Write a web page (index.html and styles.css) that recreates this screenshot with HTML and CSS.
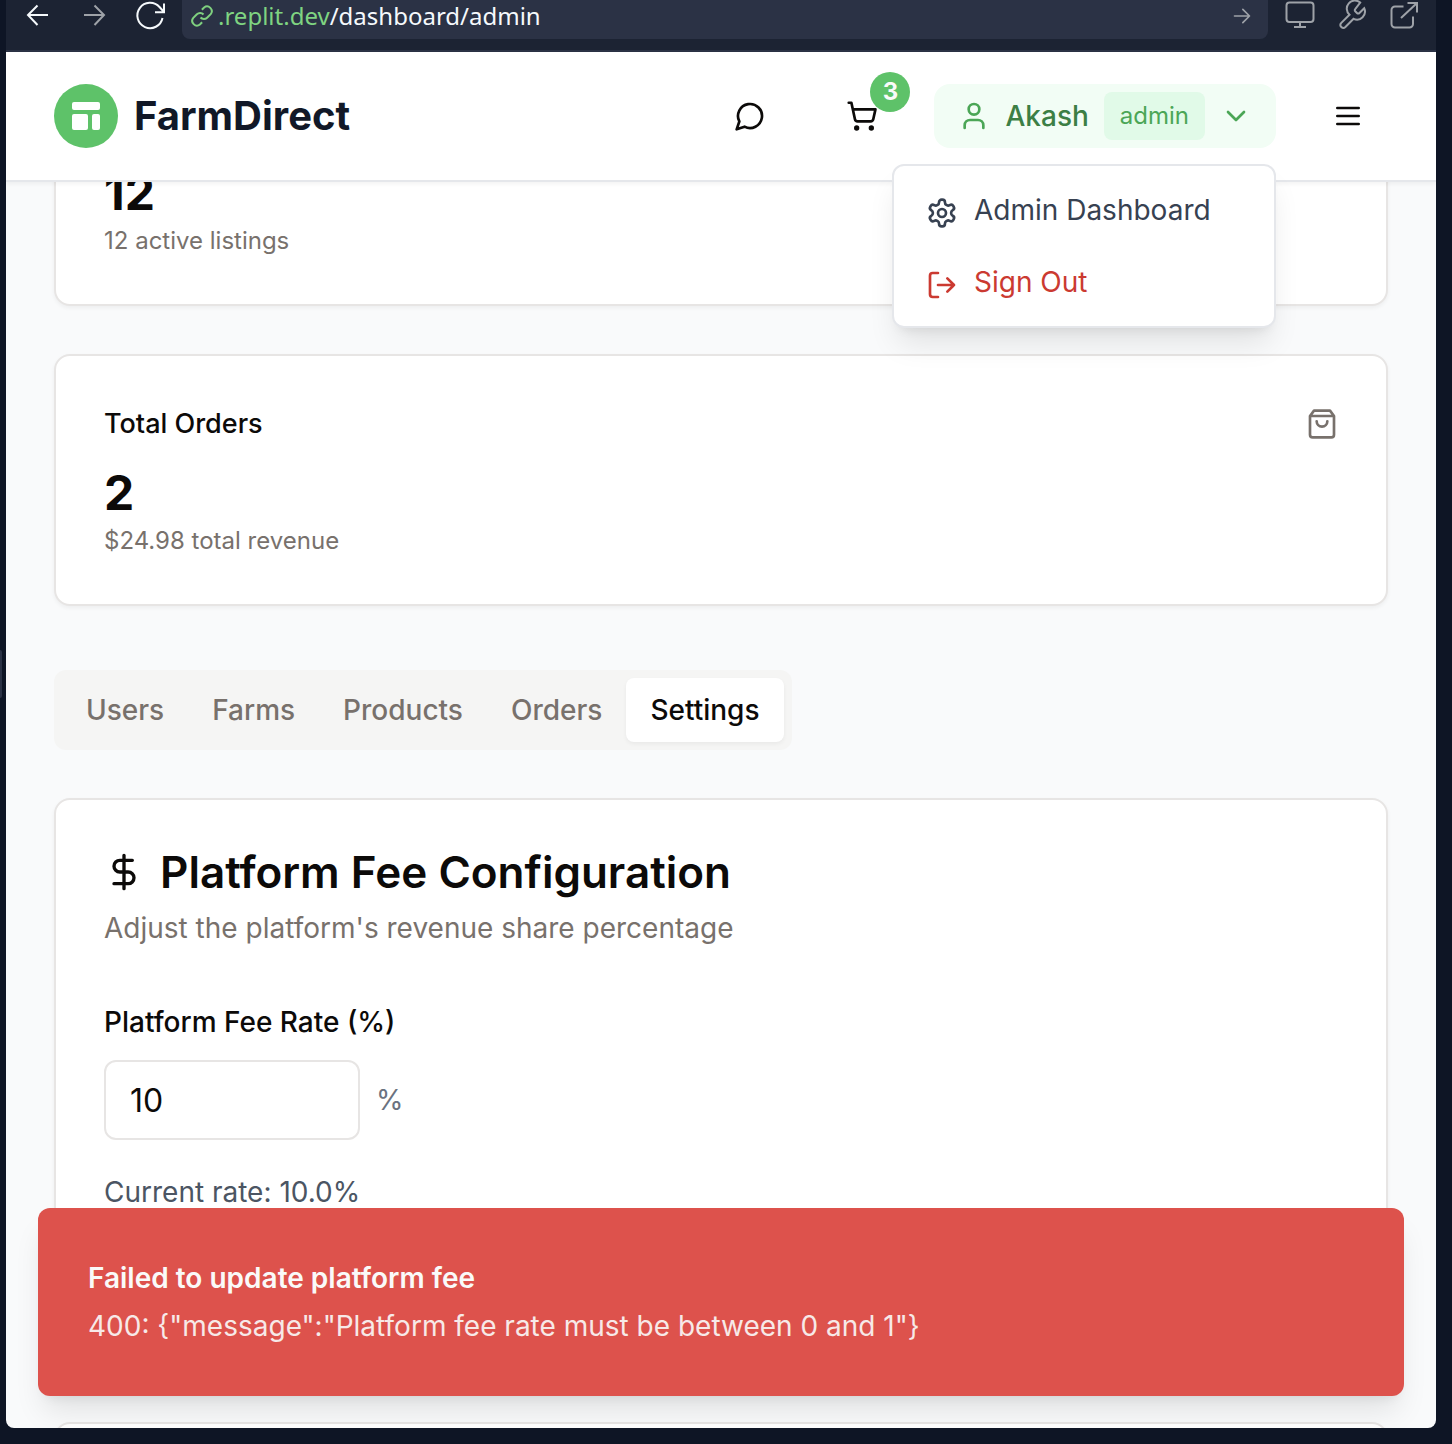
FILE: index.html
```html
<!DOCTYPE html>
<html lang="en">
<head>
<meta charset="utf-8">
<meta name="viewport" content="width=device-width, initial-scale=1">
<title>FarmDirect</title>
<link rel="stylesheet" href="styles.css">
</head>
<body>
<div class="workspace">
  <div class="rail"><span class="rail-handle"></span></div>
  <div class="preview">
    <div class="toolbar">
      <button class="tool" type="button" aria-label="Back"><svg class="icon thin" viewBox="0 0 32 32"><path d="M26 15H6M15.500 5.500 6 15l9.500 10"/></svg></button>
      <button class="tool dim" type="button" aria-label="Forward"><svg class="icon thin" viewBox="0 0 32 32"><path d="M6 15h20M16.500 5.500 26 15l-9.500 10"/></svg></button>
      <button class="tool reload" type="button" aria-label="Reload"><svg class="icon thin" viewBox="0 0 32 32"><path d="M28.500 18A12.700 12.700 0 1 1 25.500 7l4.500 5M30 3.500V12.300H21"/></svg></button>
      <form class="address">
        <svg class="icon link-icon thin" viewBox="0 0 24 24"><path d="M10.500 13.500a4.600 4.600 0 0 0 6.600.2l3.600-3.600a4.700 4.700 0 0 0-6.600-6.600l-2.200 2.200M13.500 10.500a4.600 4.600 0 0 0-6.600-.2l-3.600 3.600a4.700 4.700 0 0 0 6.600 6.600l2.200-2.200"/></svg>
        <span class="url"><span class="host">.replit.dev</span>/dashboard/admin</span>
        <button class="go" type="button" aria-label="Go"><svg class="icon go-icon" viewBox="0 0 24 24"><path d="M3 12h18M13 4l8 8-8 8"/></svg></button>
      </form>
      <div class="tools">
        <button class="tool soft" type="button" aria-label="Devices"><svg class="icon thin" viewBox="0 0 32 32"><rect x="2.500" y="2.500" width="27" height="19.500" rx="3"/><path d="M16 22v5M10 27h12"/></svg></button>
        <button class="tool soft" type="button" aria-label="Developer tools"><svg class="icon thin" viewBox="0 0 32 32"><path d="M19.200 9.200a1.400 1.400 0 0 0 0 2l2 2a1.400 1.400 0 0 0 2 0l5-5a8 8 0 0 1-10.600 10.600l-8.200 8.200a2.900 2.900 0 0 1-4.100-4.100l8.200-8.200A8 8 0 0 1 24.200 2.600z"/></svg></button>
        <button class="tool soft" type="button" aria-label="Open in new tab"><svg class="icon thin" viewBox="0 0 32 32"><path d="M25 16.500V24a3.500 3.500 0 0 1-3.500 3.500H7A3.500 3.500 0 0 1 3.500 24V10A3.500 3.500 0 0 1 7 6.500h8.500M19.500 3H29v9.500M28.500 3.500 13 18"/></svg></button>
      </div>
    </div>

    <div class="site">
      <header class="site-header">
        <a class="brand" href="#">
          <span class="brand-mark"><svg class="brand-icon" viewBox="0 0 20 20"><rect x="3" y="3" width="14" height="4" rx="1"/><rect x="3" y="9" width="8" height="8" rx="1"/><rect x="13" y="9" width="4" height="8" rx="1"/></svg></span>
          <span class="brand-name">FarmDirect</span>
        </a>
        <nav class="actions">
          <button class="icon-button" type="button" aria-label="Messages"><svg class="icon" viewBox="0 0 24 24"><path d="M7.900 20A9 9 0 1 0 4 16.100L2 22Z"/></svg></button>
          <button class="icon-button" type="button" aria-label="Cart"><svg class="icon" viewBox="0 0 24 24"><circle cx="8" cy="21" r="1"/><circle cx="19" cy="21" r="1"/><path d="M2.050 2.050h2l2.660 12.420a2 2 0 0 0 2 1.580h9.780a2 2 0 0 0 1.950-1.570l1.650-7.430H5.120"/></svg><span class="count">3</span></button>
          <div class="account">
            <button class="account-button" type="button">
              <svg class="icon" viewBox="0 0 24 24"><path d="M19 21v-2a4 4 0 0 0-4-4H9a4 4 0 0 0-4 4v2"/><circle cx="12" cy="7" r="4"/></svg>
              <span class="account-name">Akash</span>
              <span class="role">admin</span>
              <svg class="icon" viewBox="0 0 24 24"><path d="m6 9 6 6 6-6"/></svg>
            </button>
            <div class="menu">
              <a class="menu-item" href="#"><svg class="icon" viewBox="0 0 24 24"><path d="M12.220 2h-.44a2 2 0 0 0-2 2v.18a2 2 0 0 1-1 1.730l-.43.25a2 2 0 0 1-2 0l-.15-.08a2 2 0 0 0-2.730.73l-.22.38a2 2 0 0 0 .73 2.730l.15.1a2 2 0 0 1 1 1.720v.51a2 2 0 0 1-1 1.740l-.15.09a2 2 0 0 0-.73 2.730l.22.38a2 2 0 0 0 2.730.73l.15-.08a2 2 0 0 1 2 0l.43.25a2 2 0 0 1 1 1.730V20a2 2 0 0 0 2 2h.44a2 2 0 0 0 2-2v-.18a2 2 0 0 1 1-1.730l.43-.25a2 2 0 0 1 2 0l.15.08a2 2 0 0 0 2.730-.73l.22-.39a2 2 0 0 0-.73-2.730l-.15-.08a2 2 0 0 1-1-1.740v-.5a2 2 0 0 1 1-1.740l.15-.09a2 2 0 0 0 .73-2.730l-.22-.38a2 2 0 0 0-2.730-.73l-.15.08a2 2 0 0 1-2 0l-.43-.25a2 2 0 0 1-1-1.730V4a2 2 0 0 0-2-2z"/><circle cx="12" cy="12" r="3"/></svg>Admin Dashboard</a>
              <button class="menu-item danger" type="button"><svg class="icon" viewBox="0 0 24 24"><path d="M9 21H5a2 2 0 0 1-2-2V5a2 2 0 0 1 2-2h4M16 17l5-5-5-5M21 12H9"/></svg>Sign Out</button>
            </div>
          </div>
          <button class="icon-button" type="button" aria-label="Open menu"><svg class="icon" viewBox="0 0 24 24"><path d="M4 6h16M4 12h16M4 18h16"/></svg></button>
        </nav>
      </header>

      <main class="content">
        <div class="stats">
          <section class="card">
            <div class="stat-head"></div>
            <div class="stat-value">12</div>
            <p class="stat-note">12 active listings</p>
          </section>
          <section class="card">
            <div class="stat-head">
              <h3 class="stat-title">Total Orders</h3>
              <svg class="icon stat-icon" viewBox="0 0 24 24"><path d="M6 2 3 6v14a2 2 0 0 0 2 2h14a2 2 0 0 0 2-2V6l-3-4ZM3 6h18M16 10a4 4 0 0 1-8 0"/></svg>
            </div>
            <div class="stat-value">2</div>
            <p class="stat-note">$24.98 total revenue</p>
          </section>
        </div>

        <div class="tabs" role="tablist">
          <button class="tab" type="button" role="tab">Users</button>
          <button class="tab" type="button" role="tab">Farms</button>
          <button class="tab" type="button" role="tab">Products</button>
          <button class="tab" type="button" role="tab">Orders</button>
          <button class="tab active" type="button" role="tab" aria-selected="true">Settings</button>
        </div>

        <section class="card settings">
          <h2 class="card-title"><svg class="icon dollar" viewBox="0 0 24 24"><path d="M12 2v20M17 5H9.500a3.500 3.500 0 0 0 0 7h5a3.500 3.500 0 0 1 0 7H6"/></svg>Platform Fee Configuration</h2>
          <p class="card-text">Adjust the platform's revenue share percentage</p>
          <label class="field-label" for="fee">Platform Fee Rate (%)</label>
          <div class="field">
            <input class="input" id="fee" type="text" inputmode="decimal" value="10">
            <span class="unit">%</span>
          </div>
          <p class="current">Current rate: 10.0%</p>
        </section>
        <section class="card next"></section>
      </main>

      <div class="toast" role="alert">
        <div class="toast-title">Failed to update platform fee</div>
        <div class="toast-text">400: {"message":"Platform fee rate must be between 0 and 1"}</div>
      </div>
    </div>
  </div>
</div>
</body>
</html>
```
FILE: styles.css
```css
* { box-sizing: border-box; }

body {
  margin: 0;
  background: #0e1525;
  color: #0c0a09;
  font-family: Inter, "Liberation Sans", sans-serif;
  font-size: 28px;
  line-height: 40px;
}

h2, h3, p { margin: 0; }
a { color: inherit; text-decoration: none; }

button {
  margin: 0;
  padding: 0;
  border: 0;
  background: none;
  color: inherit;
  font: inherit;
}

.icon {
  display: block;
  flex: none;
  width: 32px;
  height: 32px;
  fill: none;
  stroke: currentColor;
  stroke-width: 2;
  stroke-linecap: round;
  stroke-linejoin: round;
}

.thin { stroke-linecap: butt; stroke-linejoin: miter; }

/* Workspace shell */
.workspace {
  display: grid;
  grid-template-columns: 6px minmax(0, 1fr);
  height: 100vh;
  padding: 0 16px 16px 0;
  overflow: hidden;
}

.rail-handle {
  display: block;
  width: 2px;
  height: 48px;
  margin-top: 45vh;
  border-radius: 0 2px 2px 0;
  background: #2b3245;
}

.preview {
  display: flex;
  flex-direction: column;
  min-height: 0;
  border-radius: 0 0 8px 8px;
  overflow: hidden;
}

.toolbar {
  display: flex;
  gap: 16px;
  height: 52px;
  flex: none;
  padding: 0 16px;
  border-bottom: 2px solid #2b3245;
  background: #1c2333;
  color: #f5f9fc;
}

.tool { height: 32px; }
.dim, .soft { color: #9ea2a8; }
.dim, .reload { margin-left: 8px; }

.address {
  display: flex;
  flex: 1;
  align-items: center;
  gap: 4px;
  height: 39px;
  padding: 0 16px 8px 8px;
  border-radius: 0 0 8px 8px;
  background: #2b3245;
}

.link-icon { width: 24px; height: 24px; stroke: #7fd07f; }

.url {
  flex: 1;
  font-family: "Noto Sans", sans-serif;
  font-size: 24px;
  line-height: 30px;
}

.host { color: #7fd481; }
.go { color: #9ea2a8; }
.go-icon { width: 20px; height: 24px; }
.tools { display: flex; gap: 20px; }

/* Site header */
.site {
  position: relative;
  display: flex;
  flex: 1;
  flex-direction: column;
  min-height: 0;
  background: #f9fafb;
}

.site-header {
  position: relative;
  z-index: 2;
  display: flex;
  flex: none;
  align-items: center;
  justify-content: space-between;
  height: 130px;
  padding: 0 48px;
  border-bottom: 2px solid #e5e7eb;
  background: #fff;
  box-shadow: 0 2px 4px rgba(0, 0, 0, 0.05);
}

.brand { display: flex; align-items: center; gap: 16px; }

.brand-mark {
  display: grid;
  place-items: center;
  width: 64px;
  height: 64px;
  border-radius: 50%;
  background: #5ec269;
}

.brand-icon { width: 40px; height: 40px; fill: #fff; }
.brand-name { color: #111827; font-size: 40px; font-weight: 700; line-height: 56px; }
.actions { display: flex; align-items: center; gap: 32px; }

.icon-button {
  position: relative;
  display: grid;
  place-items: center;
  width: 80px;
  height: 80px;
}

.count {
  position: absolute;
  top: -4px;
  right: -8px;
  width: 40px;
  height: 40px;
  border-radius: 50%;
  background: #5ec269;
  color: #fafaf9;
  font-size: 24px;
  font-weight: 700;
  text-align: center;
}

.account { position: relative; }

.account-button {
  display: flex;
  align-items: center;
  gap: 15px;
  height: 64px;
  padding: 0 24px;
  border-radius: 16px;
  background: #f2fdf5;
  color: #4ba656;
}

.account-name { color: #3c7f45; font-weight: 500; }

.role {
  padding: 8px 16px;
  border-radius: 8px;
  background: #e1fae8;
  font-size: 24px;
  line-height: 32px;
}

.menu {
  position: absolute;
  top: 80px;
  right: 0;
  width: 384px;
  padding: 8px 0;
  border: 2px solid #e5e7eb;
  border-radius: 12px;
  background: #fff;
  box-shadow: 0 20px 30px -6px rgba(0, 0, 0, 0.1), 0 8px 12px -8px rgba(0, 0, 0, 0.1);
}

.menu-item {
  display: flex;
  align-items: center;
  gap: 16px;
  width: 100%;
  height: 72px;
  padding: 0 32px;
  color: #374151;
}

.menu-item .icon { margin-top: 6px; }
.danger { color: #cb3a31; }

/* Dashboard; the first stat card is partly scrolled under the header */
.content {
  flex: 1;
  min-height: 0;
  padding: 0 48px;
  overflow: hidden;
}

.stats {
  display: flex;
  flex-direction: column;
  gap: 48px;
  margin-top: -128px;
}

.card {
  padding: 48px;
  border: 2px solid #e7e5e4;
  border-radius: 16px;
  background: #fff;
  box-shadow: 0 2px 4px rgba(0, 0, 0, 0.05);
}

.stat-head {
  display: flex;
  align-items: center;
  justify-content: space-between;
  height: 40px;
  margin-bottom: 16px;
}

.stat-title { font-size: 27px; font-weight: 500; }
.stat-icon { color: #78716c; }
.stat-value { font-size: 48px; font-weight: 700; line-height: 66px; }
.stat-note { color: #78716c; font-size: 24px; line-height: 30px; }

.tabs {
  display: flex;
  width: fit-content;
  margin: 64px 0 48px;
  padding: 8px;
  border-radius: 12px;
  background: #f5f5f4;
}

.tab {
  height: 64px;
  padding: 0 24px;
  border-radius: 8px;
  color: #78716c;
  font-weight: 500;
}

.active {
  background: #fff;
  color: #0c0a09;
  box-shadow: 0 2px 4px rgba(0, 0, 0, 0.05);
}

.settings { padding-bottom: 160px; }

.card-title {
  display: flex;
  align-items: center;
  gap: 16px;
  font-size: 44px;
  font-weight: 600;
  line-height: 48px;
}

.dollar { width: 40px; height: 40px; }
.card-text { margin-top: 12px; color: #78716c; }

.field-label {
  display: block;
  margin: 50px 0 14px;
  font-weight: 500;
  line-height: 48px;
}

.field { display: flex; align-items: center; gap: 16px; }

.input {
  width: 256px;
  height: 80px;
  padding: 0 24px;
  border: 2px solid #e7e5e4;
  border-radius: 12px;
  background: #fff;
  color: inherit;
  font: inherit;
  font-size: 32px;
}

.unit { color: #6b7280; }
.current { margin-top: 32px; color: #4b5563; }
.next { margin-top: 48px; }

.toast {
  position: absolute;
  right: 32px;
  bottom: 32px;
  left: 32px;
  padding: 50px;
  border-radius: 12px;
  background: #dd524c;
  color: #fafaf9;
  box-shadow: 0 20px 30px -6px rgba(0, 0, 0, 0.1), 0 8px 12px -8px rgba(0, 0, 0, 0.1);
}

.toast-title { font-weight: 600; }
.toast-text { margin-top: 8px; opacity: 0.9; }
```
